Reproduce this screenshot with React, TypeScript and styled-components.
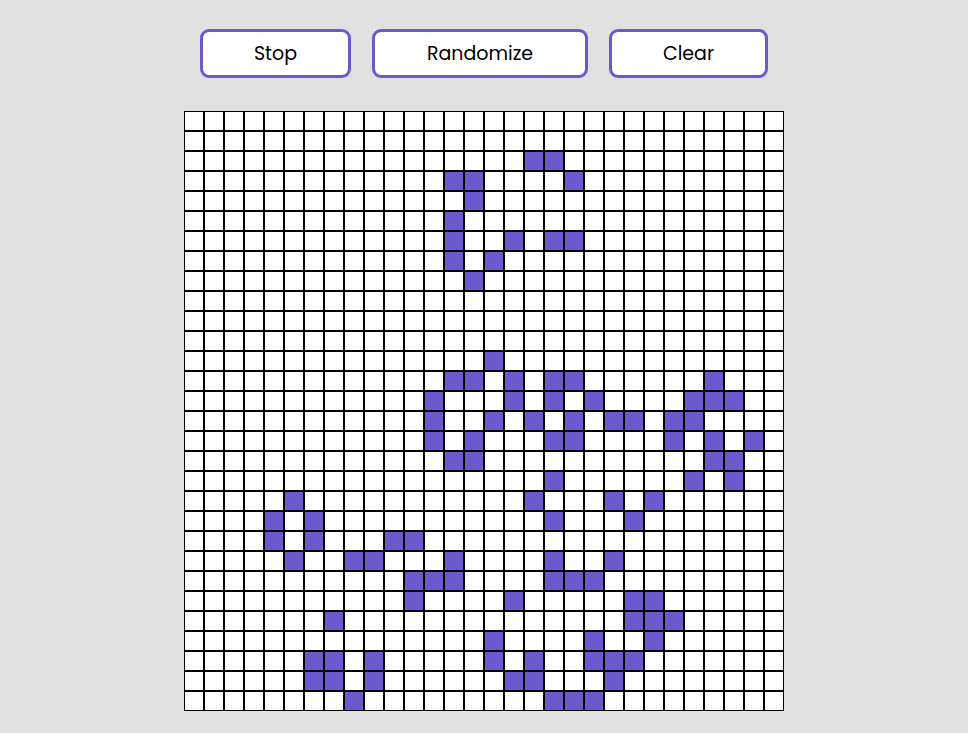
import React, { useState } from 'react';
import styled, { createGlobalStyle } from 'styled-components';

const SIZE = 30;

// live cells per row, as they stand in the snapshot
const LIVE: Record<number, number[]> = {
    2: [17, 18],
    3: [13, 14, 19],
    4: [14],
    5: [13],
    6: [13, 16, 18, 19],
    7: [13, 15],
    8: [14],
    12: [15],
    13: [13, 14, 16, 18, 19, 26],
    14: [12, 16, 18, 20, 25, 26, 27],
    15: [12, 15, 17, 19, 21, 22, 24, 25],
    16: [12, 14, 18, 19, 24, 26, 28],
    17: [13, 14, 26, 27],
    18: [18, 25, 27],
    19: [5, 17, 21, 23],
    20: [4, 6, 18, 22],
    21: [4, 6, 10, 11],
    22: [5, 8, 9, 13, 18, 21],
    23: [11, 12, 13, 18, 19, 20],
    24: [11, 16, 22, 23],
    25: [7, 22, 23, 24],
    26: [15, 20, 23],
    27: [6, 7, 9, 15, 17, 20, 21, 22],
    28: [6, 7, 9, 16, 17, 21],
    29: [8, 18, 19, 20],
};

const makeGrid = () =>
    Array.from({ length: SIZE }, (_, r) =>
        Array.from({ length: SIZE }, (_, c) => (LIVE[r] || []).includes(c))
    );

const App = () => {
    const [grid, setGrid] = useState<boolean[][]>(makeGrid);

    const toggle = (r: number, c: number) => {
        setGrid(g => g.map((row, i) => row.map((v, j) => (i === r && j === c ? !v : v))));
    };

    const randomize = () => {
        setGrid(Array.from({ length: SIZE }, () =>
            Array.from({ length: SIZE }, () => Math.random() > 0.8)));
    };

    const clear = () => {
        setGrid(Array.from({ length: SIZE }, () => Array(SIZE).fill(false)));
    };

    return (
        <Page>
            <GlobalStyle />
            <Controls>
                <ControlButton $width={151}>Stop</ControlButton>
                <ControlButton $width={216} onClick={randomize}>Randomize</ControlButton>
                <ControlButton $width={159} onClick={clear}>Clear</ControlButton>
            </Controls>
            <Board>
                {grid.map((row, r) =>
                    row.map((alive, c) => (
                        <Cell key={`${r}-${c}`} $alive={alive} onClick={() => toggle(r, c)} />
                    ))
                )}
            </Board>
        </Page>
    );
};

export default App;

const GlobalStyle = createGlobalStyle`
    body {
        margin: 0;
        background: #e1e1e1;
        font-family: "Poppins", "Inter", "Noto Sans", sans-serif;
    }
`;

const Page = styled.div`
    display: flex;
    flex-direction: column;
    align-items: center;
    padding-top: 29px;
    min-height: 100vh;
    box-sizing: border-box;
`;

const Controls = styled.div`
    display: flex;
    flex-direction: row;
    gap: 21px;
    margin-bottom: 33px;
`;

const ControlButton = styled.button<{ $width: number }>`
    width: ${p => p.$width}px;
    height: 49px;
    box-sizing: border-box;
    background: #ffffff;
    border: 3px solid #6a5acd;
    border-radius: 9px;
    color: #000000;
    font-family: "Poppins", "Inter", "Noto Sans", sans-serif;
    font-size: 19px;
    font-weight: 400;
    cursor: pointer;
`;

const Board = styled.div`
    display: grid;
    grid-template-columns: repeat(${SIZE}, 20px);
    grid-auto-rows: 20px;
`;

const Cell = styled.div<{ $alive: boolean }>`
    width: 20px;
    height: 20px;
    box-sizing: border-box;
    border: 1px solid #000000;
    background: ${p => (p.$alive ? '#6a5acd' : '#ffffff')};
`;
